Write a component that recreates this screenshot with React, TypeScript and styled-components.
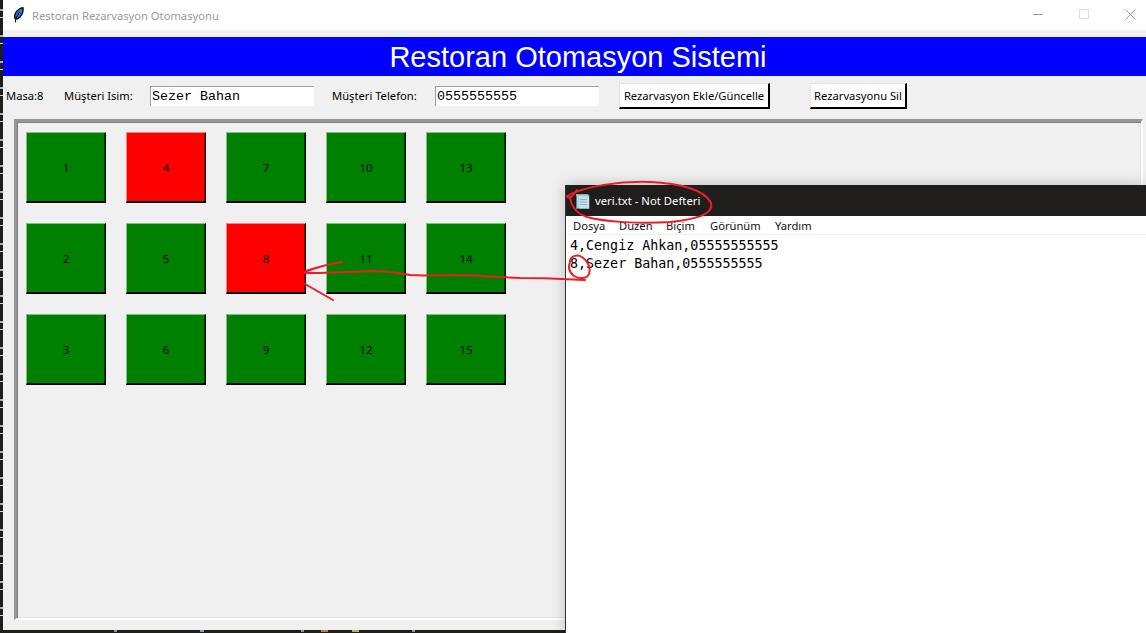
import React from 'react';
import styled, { createGlobalStyle } from 'styled-components';

const UI_FONT = '"Noto Sans", "Open Sans", sans-serif';

const GlobalStyle = createGlobalStyle`
  html, body {
    margin: 0;
    padding: 0;
    background: #1e1e1c;
    overflow: hidden;
  }
  * { box-sizing: border-box; }
`;

const Desktop = styled.div`
  position: relative;
  width: 1146px;
  height: 633px;
  overflow: hidden;
  display: flex;
  background-color: #1e1e1c;
  background-image: repeating-linear-gradient(180deg, #1e1e1c 0 9px, #9fb4c4 9px 11px, #1e1e1c 11px 17px, #d8d0c0 17px 18px, #1e1e1c 18px 26px);
  background-size: 3px 633px;
  background-repeat: no-repeat;
`;

const TkWindow = styled.div`
  margin-left: 3px;
  width: 1143px;
  height: 630px;
  background: #f0f0f0;
  display: flex;
  flex-direction: column;
`;

const BottomEdge = styled.div`
  position: absolute;
  left: 3px;
  right: 0;
  bottom: 0;
  height: 3px;
  background-color: #1e1e1c;
  background-image:
    linear-gradient(#8a93a0, #8a93a0), linear-gradient(#7f9fc0, #7f9fc0), linear-gradient(#8a93a0, #8a93a0),
    linear-gradient(#c8792a, #c8792a), linear-gradient(#b8b060, #b8b060), linear-gradient(#8a93a0, #8a93a0);
  background-repeat: no-repeat;
  background-size: 3px 2px, 4px 2px, 3px 2px, 7px 2px, 7px 2px, 3px 2px;
  background-position: 111px 0, 197px 0, 298px 0, 318px 0, 349px 0, 409px 0;
`;

const TitleBar = styled.div`
  height: 30px;
  flex: none;
  margin-right: -7px;
  background: #fff;
  display: flex;
  align-items: center;
  padding-left: 10px;
  font: 11.2px ${UI_FONT};
  color: #999;
`;

const TitleText = styled.span`
  margin-left: 8px;
  flex: 1;
`;

const WinControl = styled.span`
  width: 46px;
  height: 28px;
  align-self: flex-start;
  display: flex;
  align-items: center;
  justify-content: center;
`;

const Heading = styled.h1`
  margin: 7px 0 0;
  height: 39px;
  flex: none;
  background: #00f;
  color: #fff;
  font: 400 29px/40px "Liberation Sans", Arial, sans-serif;
  text-align: center;
  padding-left: 7px;
`;

const Toolbar = styled.div`
  height: 43px;
  flex: none;
  display: flex;
  align-items: center;
  padding-left: 3px;
  padding-bottom: 3px;
`;

const FieldLabel = styled.label<{ $w: number }>`
  width: ${(p) => p.$w}px;
  flex: none;
  padding-bottom: 1px;
  font: 11.2px ${UI_FONT};
  color: #000;
  white-space: nowrap;
`;

const TextField = styled.input<{ $after: number }>`
  width: 164px;
  height: 20px;
  flex: none;
  margin-right: ${(p) => p.$after}px;
  padding: 0 0 0 1px;
  background: #fff;
  border: none;
  border-top: 1px solid #a0a0a0;
  border-left: 1px solid #a0a0a0;
  outline: none;
  font: 13.33px "Liberation Mono", "Courier New", monospace;
  color: #000;
`;

const ActionButton = styled.button<{ $w: number; $after?: number }>`
  width: ${(p) => p.$w}px;
  height: 26px;
  flex: none;
  margin-right: ${(p) => p.$after ?? 0}px;
  padding: 0;
  background: #fff;
  border-style: solid;
  border-width: 1px 2px 2px 1px;
  border-color: #e3e3e3 #000 #000 #e3e3e3;
  font: 11.2px ${UI_FONT};
  color: #000;
  white-space: nowrap;
`;

const TableFrame = styled.div`
  flex: 1;
  margin: 0 3px 10px 11px;
  padding: 10px 9px;
  border-style: solid;
  border-width: 3px 2px 2px 3px;
  border-color: #969696 #fff #fff #969696;
  box-shadow: inset 1px 1px 0 #808080, inset -1px -1px 0 #e3e3e3;
`;

const TableGrid = styled.div`
  display: grid;
  grid-template-columns: repeat(5, 80px);
  grid-auto-rows: 71px;
  grid-auto-flow: column;
  grid-template-rows: repeat(3, 71px);
  gap: 20px;
`;

const TableButton = styled.button<{ $booked: boolean }>`
  padding: 0;
  background: ${(p) => (p.$booked ? '#f00' : '#008000')};
  border-style: solid;
  border-width: 1px 1px 2px 1px;
  border-color: ${(p) => (p.$booked ? '#ff8080' : '#7fbf7f')} #000 #000 ${(p) => (p.$booked ? '#ff8080' : '#7fbf7f')};
  box-shadow: inset -1px 0 0 ${(p) => (p.$booked ? '#a00000' : '#004000')};
  font: 11.5px ${UI_FONT};
  color: #000;
`;

const Notepad = styled.section`
  position: absolute;
  left: 565px;
  top: 185px;
  right: 0;
  bottom: 0;
  display: flex;
  flex-direction: column;
  background: #fff;
  border-left: 1px solid #333;
  box-shadow: 0 0 14px rgba(0, 0, 0, 0.22);
`;

const NotepadTitle = styled.div`
  height: 31px;
  flex: none;
  background: #1f1e1c;
  color: #fff;
  display: flex;
  align-items: center;
  gap: 4px;
  padding-left: 9px;
  font: 11.3px ${UI_FONT};
`;

const NotepadMenu = styled.nav`
  height: 19px;
  flex: none;
  display: flex;
  align-items: center;
  padding-left: 7px;
  border-bottom: 1px solid #f0f0f0;
  font: 11.2px ${UI_FONT};
  color: #111;
`;

const MenuEntry = styled.span<{ $w: number }>`
  width: ${(p) => p.$w}px;
  flex: none;
`;

const NotepadText = styled.pre`
  margin: 0;
  padding: 2px 0 0 4px;
  font: 13.33px/18px "DejaVu Sans Mono", Consolas, monospace;
  color: #000;
`;

const InkLayer = styled.svg`
  position: absolute;
  left: 0;
  top: 0;
  pointer-events: none;
`;

const tables = [1, 2, 3, 4, 5, 6, 7, 8, 9, 10, 11, 12, 13, 14, 15];
const booked = [4, 8];
const menus: [string, number][] = [['Dosya', 46], ['Düzen', 47], ['Biçim', 44], ['Görünüm', 65], ['Yardım', 60]];

const Feather = () => (
  <svg width="11" height="16" viewBox="0 0 11 16">
    <path d="M2 11.5 C.5 7 4.5 1.5 10 .7 C10.8 5 8.5 10 4.2 12 Z" fill="#2f74d8" stroke="#000" strokeWidth="1.2" />
    <path d="M2.2 15.5 L3 11 L6.5 5" stroke="#000" strokeWidth="1" fill="none" />
  </svg>
);

const NotepadIcon = () => (
  <svg width="16" height="16" viewBox="0 0 16 16">
    <rect x="1.5" y="2" width="12.5" height="13.5" fill="#a8d4e4" stroke="#5f8798" />
    <rect x="4" y="3.5" width="10" height="12" fill="#c4e2ee" />
    <path d="M2 1v2M4 1v2M6 1v2M8 1v2M10 1v2M12 1v2" stroke="#e8e8e8" strokeWidth="1" />
    <path d="M5 6.5h7M5 9h7M5 11.5h7" stroke="#8fb4c4" strokeWidth="1" />
  </svg>
);

const App: React.FC = () => {
  return (
    <>
      <GlobalStyle />
      <Desktop>
        <TkWindow>
          <TitleBar>
            <Feather />
            <TitleText>Restoran Rezarvasyon Otomasyonu</TitleText>
            <WinControl>
              <svg width="10" height="10" viewBox="0 0 10 10"><path d="M0 5.5h10" stroke="#999" /></svg>
            </WinControl>
            <WinControl>
              <svg width="10" height="10" viewBox="0 0 10 10"><rect x=".5" y=".5" width="9" height="9" fill="none" stroke="#ddd" /></svg>
            </WinControl>
            <WinControl>
              <svg width="11" height="11" viewBox="0 0 11 11"><path d="M.5.5l10 10M10.5.5l-10 10" stroke="#999" /></svg>
            </WinControl>
          </TitleBar>
          <Heading>Restoran Otomasyon Sistemi</Heading>
          <Toolbar>
            <FieldLabel $w={58}>Masa:8</FieldLabel>
            <FieldLabel $w={86}>Müşteri Isim:</FieldLabel>
            <TextField $after={18} defaultValue="Sezer Bahan" />
            <FieldLabel $w={103}>Müşteri Telefon:</FieldLabel>
            <TextField $after={20} defaultValue="0555555555" />
            <ActionButton $w={151} $after={40}>Rezarvasyon Ekle/Güncelle</ActionButton>
            <ActionButton $w={97}>Rezarvasyonu Sil</ActionButton>
          </Toolbar>
          <TableFrame>
            <TableGrid>
              {tables.map((n) => (
                <TableButton key={n} $booked={booked.includes(n)}>{n}</TableButton>
              ))}
            </TableGrid>
          </TableFrame>
        </TkWindow>
        <BottomEdge />
        <Notepad>
          <NotepadTitle>
            <NotepadIcon />
            <span>veri.txt - Not Defteri</span>
          </NotepadTitle>
          <NotepadMenu>
            {menus.map(([label, w]) => (
              <MenuEntry key={label} $w={w}>{label}</MenuEntry>
            ))}
          </NotepadMenu>
          <NotepadText>{'4,Cengiz Ahkan,05555555555\n8,Sezer Bahan,0555555555'}</NotepadText>
        </Notepad>
        <InkLayer width="1146" height="633" viewBox="0 0 1146 633" fill="none" stroke="#ee1c24" strokeWidth="2" strokeLinecap="round" strokeLinejoin="round">
          <path d="M577 190 C572 197 569 200 567 196 C585 186 620 181 650 182 C680 183 705 190 711 203 C714 213 700 219 670 222 C640 224 605 222 587 217 C575 213 571 205 570 197" />
          <path d="M570 262 C570 256 577 254 582 257 C588 261 591 268 589 274 C587 279 579 279 574 276 C569 272 568 267 570 262" />
          <path d="M585 280 C570 280 560 278 520 278 C495 277 470 275 453 275 C435 275 425 276 410 275 C395 272 385 271 370 271 C350 272 325 273 305 273" />
          <path d="M305 272 C315 268 328 264 342 262 C328 264 315 268 306 271" />
          <path d="M305 284 L333 300" />
        </InkLayer>
      </Desktop>
    </>
  );
};

export default App;
